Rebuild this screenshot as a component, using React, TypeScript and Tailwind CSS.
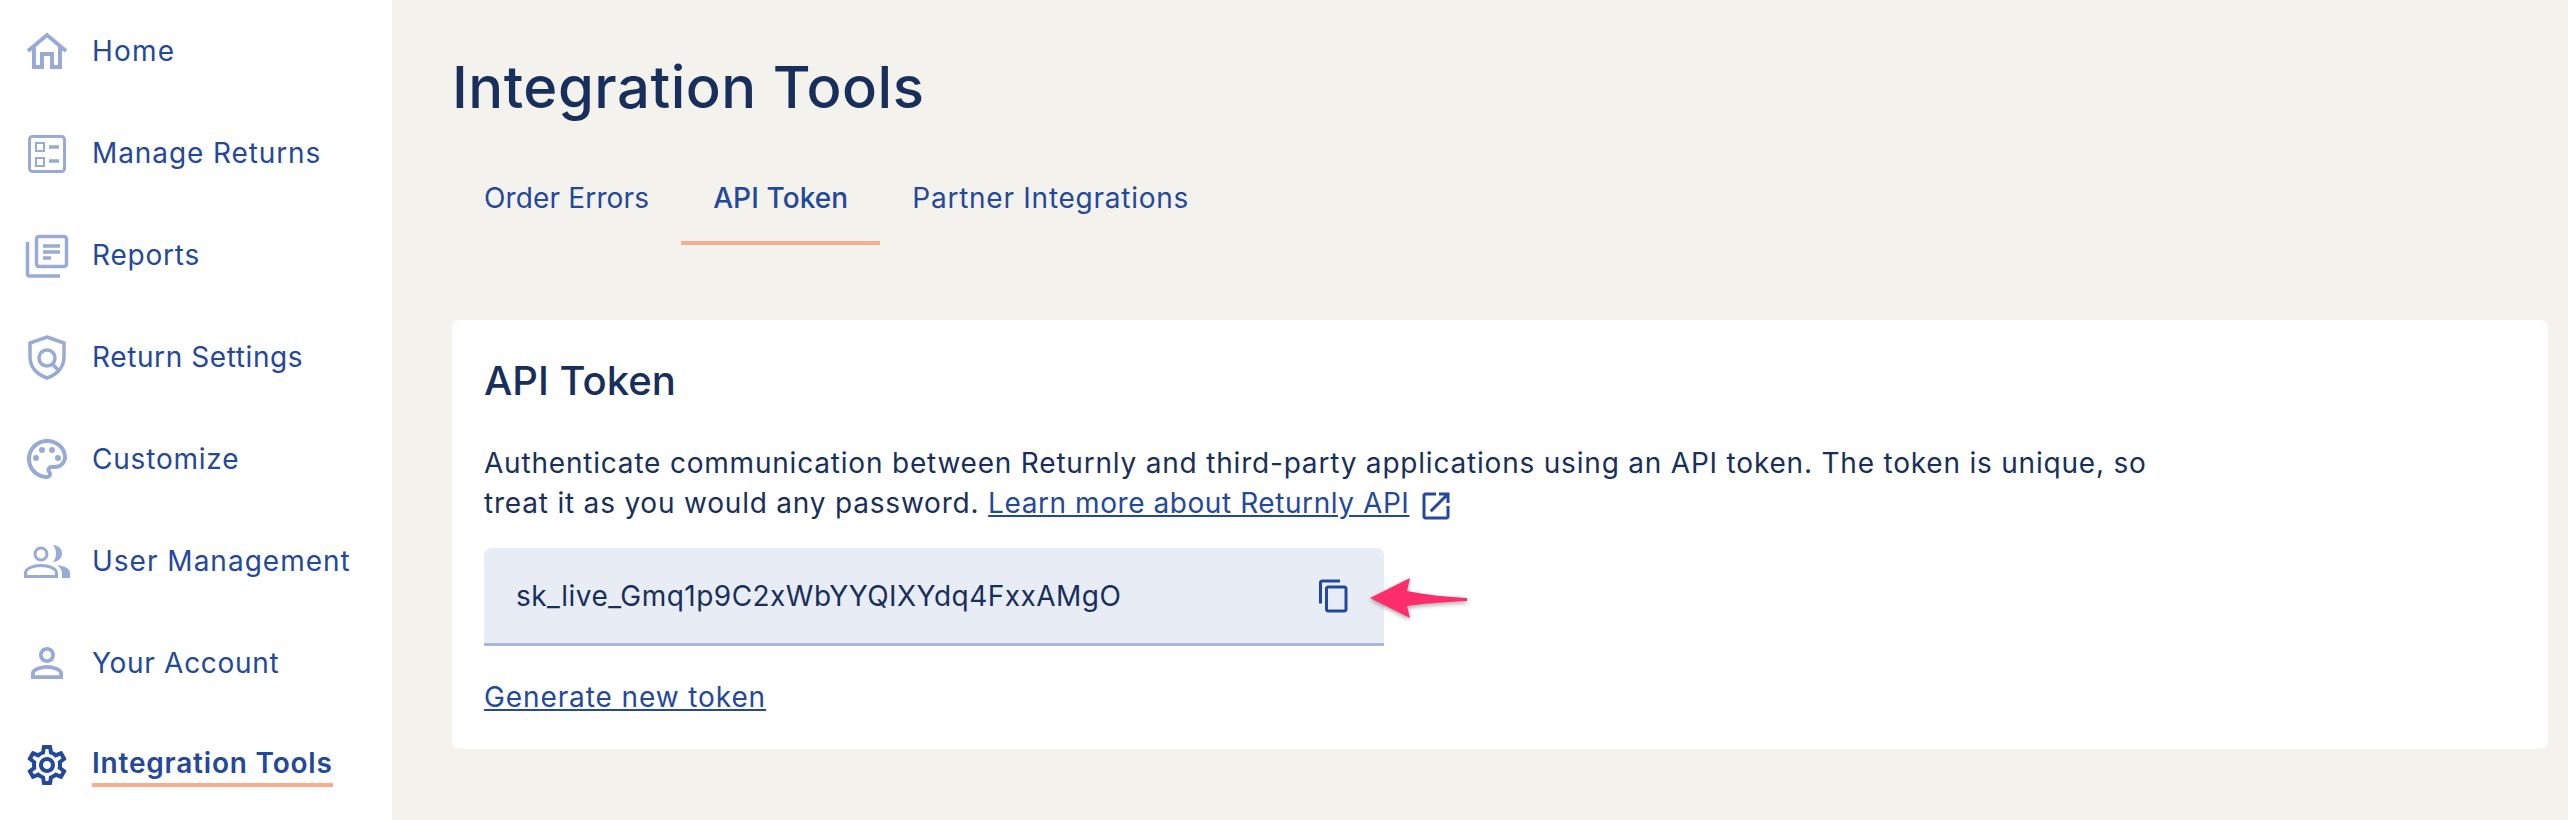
import type { ReactNode } from 'react';

const FONT = "font-['Inter','Noto_Sans',sans-serif]";

function Icon({ children, active }: { children: ReactNode; active?: boolean }) {
  return (
    <svg
      viewBox="0 0 48 48"
      className={active ? 'w-12 h-12 shrink-0 text-[#24489c]' : 'w-12 h-12 shrink-0 text-[#98aad6]'}
    >
      {children}
    </svg>
  );
}

function HomeIcon() {
  return (
    <Icon>
      <path d="M5 24 L24 8 L43 24 M11 20 V40 H19 V27 H29 V40 H37 V20" fill="none" stroke="currentColor" strokeWidth="4" />
    </Icon>
  );
}

function ReturnsIcon() {
  return (
    <Icon>
      <rect x="6.5" y="7.5" width="35" height="35" rx="3" fill="none" stroke="currentColor" strokeWidth="3" />
      <rect x="13" y="14" width="8" height="8" fill="none" stroke="currentColor" strokeWidth="2" />
      <rect x="13" y="29" width="8" height="8" fill="none" stroke="currentColor" strokeWidth="2" />
      <path d="M26 18 H36 M26 32 H36" stroke="currentColor" strokeWidth="3.5" />
    </Icon>
  );
}

function ReportsIcon() {
  return (
    <Icon>
      <rect x="13.5" y="5.5" width="30" height="30" rx="2.5" fill="none" stroke="currentColor" strokeWidth="3.5" />
      <path d="M4.5 11 V43 a2 2 0 0 0 2 2 H37" fill="none" stroke="currentColor" strokeWidth="3.5" />
      <path d="M20 15 H37 M20 21 H37 M20 27 H28" stroke="currentColor" strokeWidth="3.5" />
    </Icon>
  );
}

function ShieldIcon() {
  return (
    <Icon>
      <path d="M24 4 L41 10 V24 C41 35 33 42 24 45 C15 42 7 35 7 24 V10 Z" fill="none" stroke="currentColor" strokeWidth="3.5" />
      <circle cx="24" cy="25" r="8" fill="none" stroke="currentColor" strokeWidth="3.5" />
      <path d="M29.5 31 L36 38" stroke="currentColor" strokeWidth="3.5" />
    </Icon>
  );
}

function PaletteIcon() {
  return (
    <svg viewBox="0 0 24 24" className="w-12 h-12 shrink-0 text-[#98aad6]" fill="currentColor">
      <path d="M12 22C6.49 22 2 17.51 2 12S6.49 2 12 2s10 4.04 10 9c0 3.31-2.69 6-6 6h-1.77c-.28 0-.5.22-.5.5 0 .12.05.23.13.33.41.47.64 1.06.64 1.67A2.5 2.5 0 0 1 12 22zm0-18c-4.41 0-8 3.59-8 8s3.59 8 8 8c.28 0 .5-.22.5-.5a.54.54 0 0 0-.14-.35c-.41-.46-.63-1.05-.63-1.65a2.5 2.5 0 0 1 2.5-2.5H16c2.21 0 4-1.79 4-4 0-3.86-3.59-7-8-7z" />
      <circle cx="6.5" cy="11.5" r="1.5" />
      <circle cx="9.5" cy="7.5" r="1.5" />
      <circle cx="14.5" cy="7.5" r="1.5" />
      <circle cx="17.5" cy="11.5" r="1.5" />
    </svg>
  );
}

function UsersIcon() {
  return (
    <Icon>
      <circle cx="18" cy="17" r="6" fill="none" stroke="currentColor" strokeWidth="3" />
      <path d="M2.500 39.500 V36 C2.500 31 11 28.500 18 28.500 S33.500 31 33.500 36 V39.500 Z" fill="none" stroke="currentColor" strokeWidth="3" />
      <path d="M30 8 C35 8 39 12 39 16.500 S35 25 30 25 C32 22.500 33 20 33 16.500 S32 10.500 30 8 Z" fill="currentColor" />
      <path d="M34 28 C41 29 47 31 47 36 V41 H39 V37 C39 33 37 30 34 28 Z" fill="currentColor" />
    </Icon>
  );
}

function PersonIcon() {
  return (
    <svg viewBox="0 0 24 24" className="w-12 h-12 shrink-0 text-[#98aad6]" fill="currentColor">
      <path d="M12 5.9a2.1 2.1 0 1 1 0 4.2 2.1 2.1 0 0 1 0-4.2m0 9c2.97 0 6.1 1.46 6.1 2.1v1.1H5.9V17c0-.64 3.13-2.1 6.1-2.1M12 4C9.79 4 8 5.79 8 8s1.79 4 4 4 4-1.79 4-4-1.79-4-4-4zm0 9c-2.67 0-8 1.34-8 4v3h16v-3c0-2.66-5.33-4-8-4z" />
    </svg>
  );
}

function GearIcon() {
  return (
    <svg viewBox="0 0 24 24" className="w-12 h-12 shrink-0 text-[#24489c]" fill="currentColor">
      <path d="M19.43 12.98c.04-.32.07-.64.07-.98 0-.34-.03-.66-.07-.98l2.11-1.65c.19-.15.24-.42.12-.64l-2-3.46a.5.5 0 0 0-.61-.22l-2.49 1c-.52-.4-1.08-.73-1.69-.98l-.38-2.65A.488.488 0 0 0 14 2h-4c-.25 0-.46.18-.49.42l-.38 2.65c-.61.25-1.17.59-1.69.98l-2.49-1a.566.566 0 0 0-.18-.03c-.17 0-.34.09-.43.25l-2 3.46c-.13.22-.07.49.12.64l2.11 1.65c-.04.32-.07.65-.07.98 0 .33.03.66.07.98l-2.11 1.65c-.19.15-.24.42-.12.64l2 3.46a.5.5 0 0 0 .61.22l2.49-1c.52.4 1.08.73 1.69.98l.38 2.65c.03.24.24.42.49.42h4c.25 0 .46-.18.49-.42l.38-2.65c.61-.25 1.17-.59 1.69-.98l2.49 1c.06.02.12.03.18.03.17 0 .34-.09.43-.25l2-3.46c.12-.22.07-.49-.12-.64l-2.11-1.65zm-1.98-1.71c.04.31.05.52.05.73 0 .21-.02.43-.05.73l-.14 1.13.89.7 1.08.84-.7 1.21-1.27-.51-1.04-.42-.9.68c-.43.32-.84.56-1.25.73l-1.06.43-.16 1.13-.2 1.35h-1.4l-.19-1.35-.16-1.13-1.06-.43c-.43-.18-.83-.41-1.23-.71l-.91-.7-1.06.43-1.27.51-.7-1.21 1.08-.84.89-.7-.14-1.13c-.03-.31-.05-.54-.05-.74s.02-.43.05-.73l.14-1.13-.89-.7-1.08-.84.7-1.21 1.27.51 1.04.42.9-.68c.43-.32.84-.56 1.25-.73l1.06-.43.16-1.13.2-1.35h1.39l.19 1.35.16 1.13 1.06.43c.43.18.83.41 1.23.71l.91.7 1.06-.43 1.27-.51.7 1.21-1.07.85-.89.7.14 1.13zM12 8c-2.21 0-4 1.79-4 4s1.79 4 4 4 4-1.79 4-4-1.79-4-4-4zm0 6c-1.1 0-2-.9-2-2s.9-2 2-2 2 .9 2 2-.9 2-2 2z" />
    </svg>
  );
}

const NAV = [
  { label: 'Home', icon: <HomeIcon />, track: 'tracking-[1.2px]' },
  { label: 'Manage Returns', icon: <ReturnsIcon />, track: 'tracking-[0.9px]' },
  { label: 'Reports', icon: <ReportsIcon />, track: 'tracking-[0.8px]' },
  { label: 'Return Settings', icon: <ShieldIcon />, track: 'tracking-[0.6px]' },
  { label: 'Customize', icon: <PaletteIcon />, track: 'tracking-[0.8px]' },
  { label: 'User Management', icon: <UsersIcon />, track: 'tracking-[1px]' },
  { label: 'Your Account', icon: <PersonIcon />, track: 'tracking-[0.7px]' },
];

export default function App() {
  return (
    <div className={`${FONT} flex w-[2568px] h-[820px] overflow-hidden bg-[#f4f2ed]`}>
      <aside className="w-[392px] shrink-0 bg-white">
        {NAV.map(item => (
          <div key={item.label} className="flex items-center h-[102px] pl-[23px] gap-[21px]">
            {item.icon}
            <span className={`text-[28px] text-[#24489c] ${item.track}`}>{item.label}</span>
          </div>
        ))}
        <div className="flex items-center h-[102px] pl-[23px] gap-[21px]">
          <GearIcon />
          <span className="text-[28px] tracking-[0.8px] font-semibold text-[#24489c] border-b-4 border-[#f6ad90] leading-[40px]">
            Integration Tools
          </span>
        </div>
      </aside>

      <main className="flex-1 pl-[60px] pr-5">
        <h1 className="pt-[52px] text-[58px] tracking-[0.5px] leading-[70px] font-medium text-[#182f5c]">Integration Tools</h1>

        <div className="flex mt-[35px] text-[28px] text-[#24489c]">
          <div className="h-[88px] px-8 pt-[21px] leading-[40px] tracking-[0.15px]">Order Errors</div>
          <div className="h-[88px] px-8 pt-[21px] leading-[40px] tracking-[0.1px] font-medium border-b-4 border-[#f6ad90]">API Token</div>
          <div className="h-[88px] px-8 pt-[21px] leading-[40px] tracking-[0.75px]">Partner Integrations</div>
        </div>

        <section className="mt-[75px] h-[429px] rounded-lg bg-white px-8 pt-[34px]">
          <h2 className="text-[40px] leading-[54px] font-medium text-[#182f5c]">API Token</h2>
          <p className="mt-[35px] text-[28px] tracking-[0.8px] leading-[40px] text-[#182f5c]">
            Authenticate communication between Returnly and third-party applications using an API token. The token is unique, so
            <br />
            treat it as you would any password.{' '}
            <a className="underline tracking-[0.57px] text-[#24489c]">Learn more about Returnly API</a>
            <svg viewBox="0 0 24 24" className="inline-block w-9 h-9 ml-[9px] align-[-11px] text-[#24489c]" fill="currentColor">
              <path d="M19 19H5V5h7V3H5c-1.11 0-2 .9-2 2v14c0 1.1.89 2 2 2h14c1.1 0 2-.9 2-2v-7h-2v7zM14 3v2h3.59l-9.83 9.83 1.41 1.41L19 6.41V10h2V3h-7z" />
            </svg>
          </p>

          <div className="relative mt-[24px] flex items-center justify-between w-[900px] h-[98px] rounded-t-lg border-b-[3px] border-[#a9b7dc] bg-[#e8ecf5] pl-8 pr-[32px]">
            <span className="text-[28px] tracking-[0.47px] text-[#182f5c]">sk_live_Gmq1p9C2xWbYYQIXYdq4FxxAMgO</span>
            <svg viewBox="0 0 24 24" className="w-9 h-9 text-[#24489c]" fill="currentColor">
              <path d="M16 1H4c-1.1 0-2 .9-2 2v14h2V3h12V1zm3 4H8c-1.100 0-2 .9-2 2v14c0 1.100.9 2 2 2h11c1.100 0 2-.9 2-2V7c0-1.100-.9-2-2-2zm0 16H8V7h11v14z" />
            </svg>
            <svg viewBox="0 0 100 44" className="absolute left-[884px] top-[28px] w-[100px] h-[44px] drop-shadow-[0_2px_2px_rgba(0,0,0,0.35)]">
              <path d="M2 22 L42 2 L39 15 C60 19 80 21 99 22 L99 25 C80 26 60 27 39 30 L42 42 Z" fill="#ff2d6b" />
            </svg>
          </div>

          <a className="block mt-[31px] text-[28px] tracking-[0.9px] leading-[40px] underline text-[#24489c]">Generate new token</a>
        </section>
      </main>
    </div>
  );
}
